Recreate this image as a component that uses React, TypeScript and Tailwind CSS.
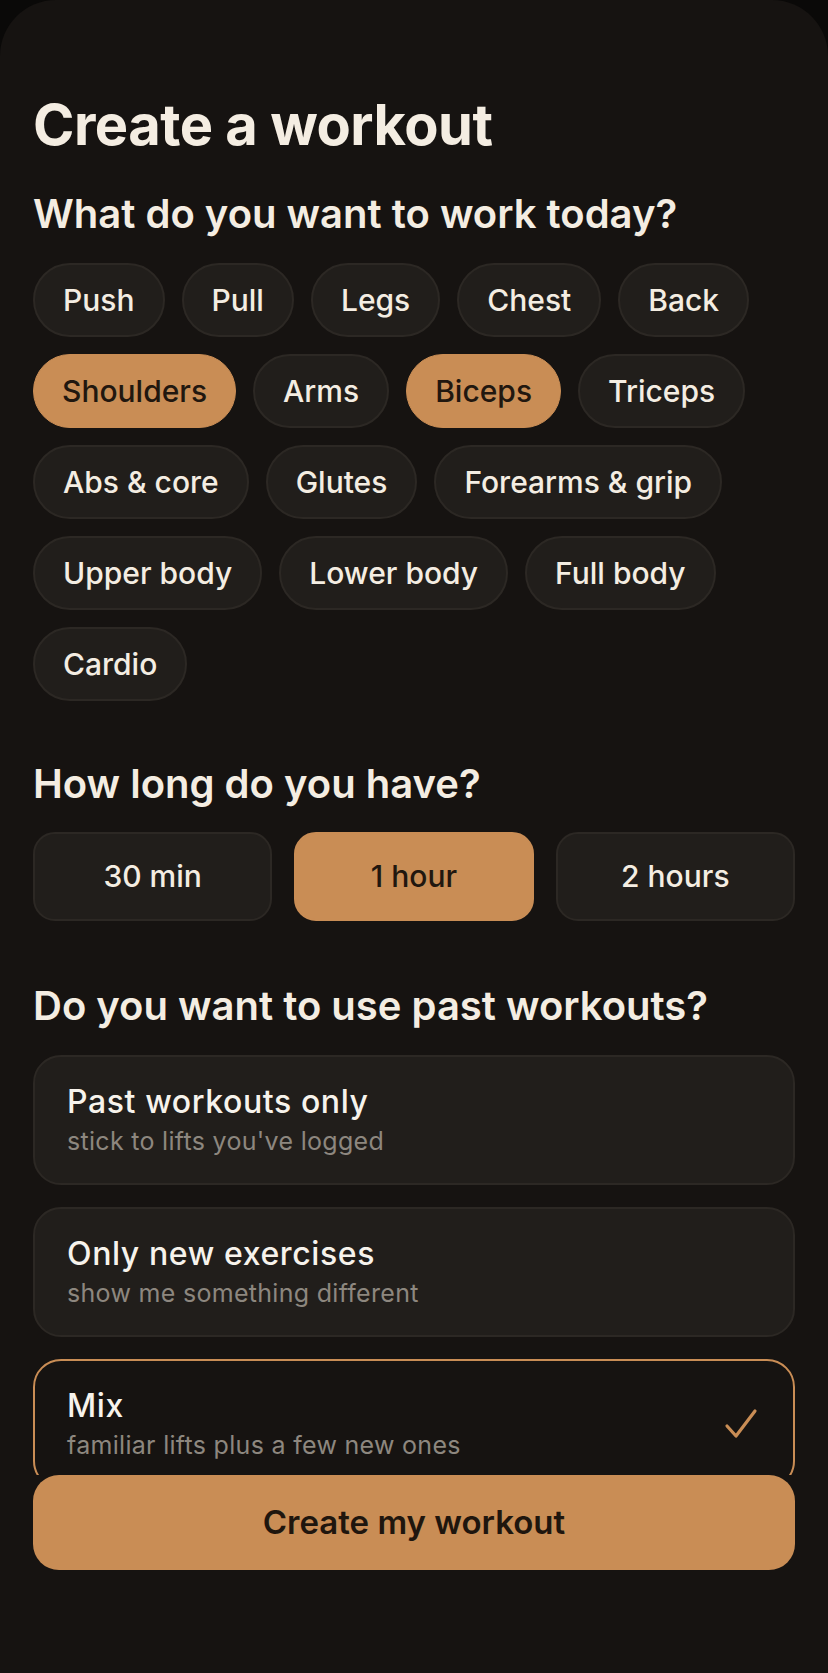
import React, { useState } from "react";

const bodyParts = [
  "Push",
  "Pull",
  "Legs",
  "Chest",
  "Back",
  "Shoulders",
  "Arms",
  "Biceps",
  "Triceps",
  "Abs & core",
  "Glutes",
  "Forearms & grip",
  "Upper body",
  "Lower body",
  "Full body",
  "Cardio",
];

const durations = ["30 min", "1 hour", "2 hours"];

const historyOptions = [
  { id: "past", title: "Past workouts only", sub: "stick to lifts you've logged" },
  { id: "new", title: "Only new exercises", sub: "show me something different" },
  { id: "mix", title: "Mix", sub: "familiar lifts plus a few new ones" },
];

export default function App() {
  const [picked, setPicked] = useState<string[]>(["Shoulders", "Biceps"]);
  const [duration, setDuration] = useState("1 hour");
  const [history, setHistory] = useState("mix");

  const toggle = (p: string) =>
    setPicked((cur) => (cur.includes(p) ? cur.filter((x) => x !== p) : [...cur, p]));

  return (
    <div
      className="min-h-[1673px] bg-[#0a0908]"
      style={{ fontFamily: "Inter, 'Noto Sans', sans-serif" }}
    >
      <div className="h-[1673px] rounded-t-[56px] bg-[#161311] px-[33px] flex flex-col">
        {/* scroll area, clipped under the footer button */}
        <div className="h-[1475px] overflow-hidden pt-[92px]">
          <h1 className="text-[56px] leading-[66px] font-bold tracking-[-0.5px] text-[#f4ede2]">
            Create a workout
          </h1>

          <h2 className="mt-[34px] text-[40px] leading-[44px] font-semibold text-[#f4ede2]">
            What do you want to work today?
          </h2>

          {/* Body part chips */}
          <div className="mt-[27px] flex flex-wrap gap-x-[17px] gap-y-[17px]">
            {bodyParts.map((p) => {
              const on = picked.includes(p);
              return (
                <button
                  key={p}
                  onClick={() => toggle(p)}
                  className={
                    on
                      ? "h-[74px] px-[28px] rounded-full border border-[#c98d55] bg-[#c98d55] text-[30px] font-medium text-[#21170f]"
                      : "h-[74px] px-[28px] rounded-full border-2 border-[#2c2824] bg-[#211e1b] text-[30px] font-medium text-[#f4ede2]"
                  }
                >
                  {p}
                </button>
              );
            })}
          </div>

          <h2 className="mt-[61px] text-[40px] leading-[44px] font-semibold text-[#f4ede2]">
            How long do you have?
          </h2>

          <div className="mt-[26px] grid grid-cols-3 gap-[22px]">
            {durations.map((d) => (
              <button
                key={d}
                onClick={() => setDuration(d)}
                className={
                  duration === d
                    ? "h-[89px] rounded-[22px] border-2 border-[#c98d55] bg-[#c98d55] text-[30px] font-medium text-[#21170f]"
                    : "h-[89px] rounded-[22px] border-2 border-[#2c2824] bg-[#211e1b] text-[30px] font-medium text-[#f4ede2]"
                }
              >
                {d}
              </button>
            ))}
          </div>

          <h2 className="mt-[63px] text-[40px] leading-[44px] font-semibold text-[#f4ede2]">
            Do you want to use past workouts?
          </h2>

          <div className="mt-[27px] flex flex-col gap-[22px]">
            {historyOptions.map((o) => {
              const on = history === o.id;
              return (
                <button
                  key={o.id}
                  onClick={() => setHistory(o.id)}
                  className={
                    on
                      ? "h-[130px] rounded-[28px] border-2 border-[#c98d55] bg-[#161311] px-[32px] flex items-center justify-between text-left"
                      : "h-[130px] rounded-[28px] border-2 border-[#2c2824] bg-[#211e1b] px-[32px] flex items-center justify-between text-left"
                  }
                >
                  <div className="flex flex-col gap-[6px]">
                    <span className="text-[32px] leading-[36px] font-medium tracking-[0.6px] text-[#f7f3ec]">
                      {o.title}
                    </span>
                    <span className="text-[25px] leading-[30px] tracking-[0.3px] text-[#8d877f]">
                      {o.sub}
                    </span>
                  </div>
                  {on && (
                    <svg width="36" height="34" viewBox="0 0 36 34" fill="none" className="mr-[2px]">
                      <path
                        d="M4 19 L13 29 L32 4"
                        stroke="#c98d55"
                        strokeWidth="3.2"
                        strokeLinecap="round"
                        strokeLinejoin="round"
                      />
                    </svg>
                  )}
                </button>
              );
            })}
          </div>
        </div>

        <button className="h-[95px] rounded-[26px] bg-[#c98d55] text-[33px] font-semibold text-[#1f160e]">
          Create my workout
        </button>
      </div>
    </div>
  );
}
